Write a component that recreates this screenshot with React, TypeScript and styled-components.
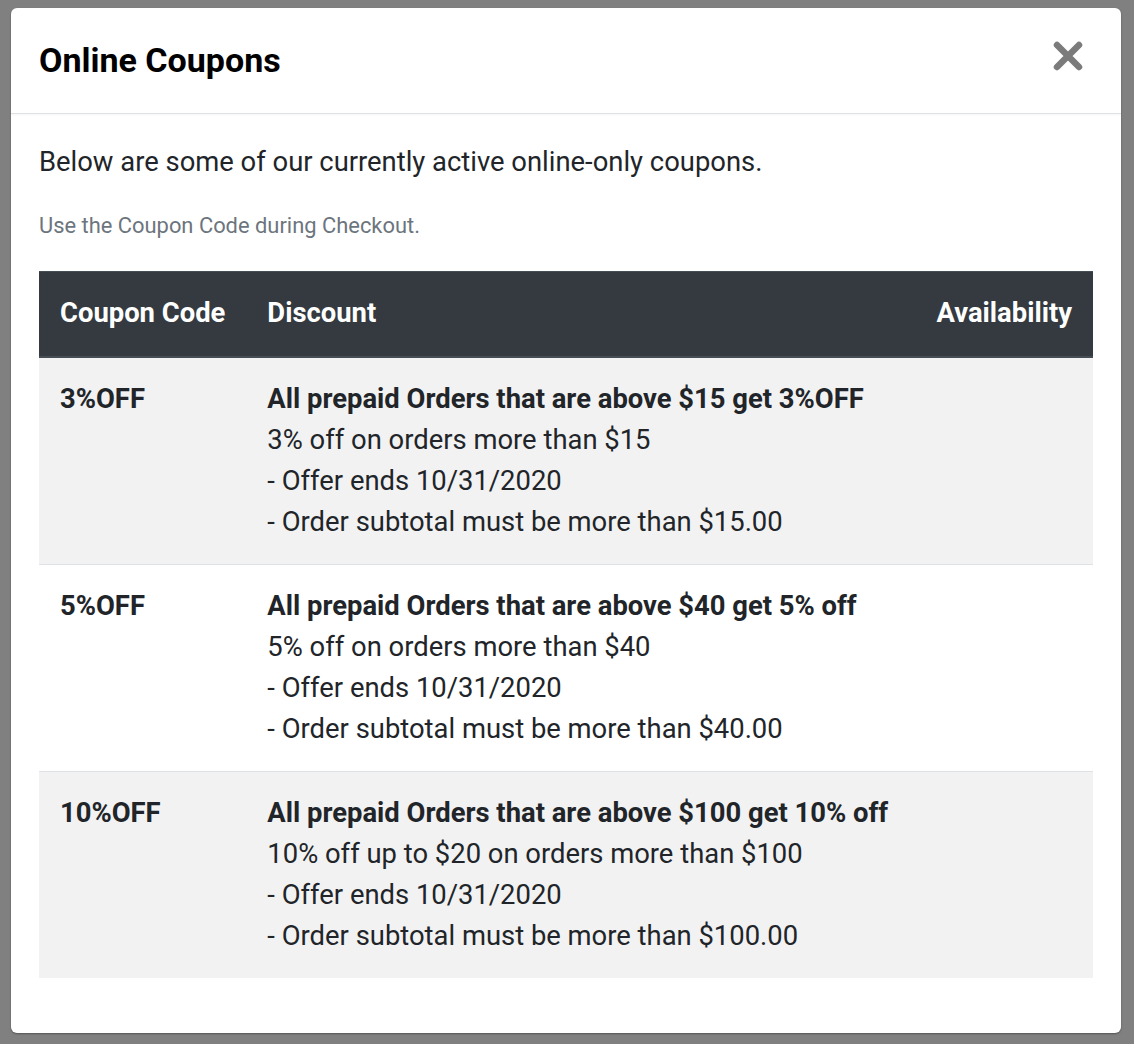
import { createGlobalStyle } from "styled-components";
import styled from "styled-components";

const GlobalStyle = createGlobalStyle`
	html, body {
		margin: 0;
		padding: 0;
		background: #808080;
	}
	body {
		font-family: Roboto, "Liberation Sans", Arial, sans-serif;
		color: #212529;
	}
`;

const Backdrop = styled.div`
	min-height: 1044px;
	padding: 8px 13px 0 11px;
	box-sizing: border-box;
`;

const Modal = styled.div`
	width: 1110px;
	background: #fff;
	border-radius: 6px;
	box-shadow: 0 1px 2px rgba(0, 0, 0, 0.35);
	overflow: hidden;
`;

const Header = styled.header`
	display: flex;
	align-items: center;
	justify-content: space-between;
	padding: 28px;
	border-bottom: 1px solid #dee2e6;
	box-shadow: 0 1px 2px rgba(0, 0, 0, 0.04);
`;

const Title = styled.h5`
	margin: 0;
	font-size: 34px;
	line-height: 49px;
	font-weight: 700;
	color: #000;
`;

const CloseButton = styled.button`
	display: flex;
	align-items: center;
	justify-content: center;
	width: 40px;
	height: 40px;
	margin: -9px 5px 0 0;
	padding: 0;
	border: 0;
	background: transparent;
	cursor: pointer;
`;

const Body = styled.div`
	padding: 28px 28px 27px;
`;

const Lead = styled.p`
	margin: 0 0 28px;
	font-size: 27.4px;
	line-height: 41px;
	color: #212529;
`;

const Hint = styled.p`
	margin: 0 0 31px;
	font-size: 21.9px;
	line-height: 29px;
	color: #6c757d;
`;

const Table = styled.table`
	width: 100%;
	margin-bottom: 28px;
	border-collapse: collapse;
	font-size: 27.4px;
	line-height: 41px;
`;

const HeadCell = styled.th<{ $align?: "left" | "right"; $width?: string }>`
	padding: 21px 21px 22px;
	text-align: ${({ $align }) => $align ?? "left"};
	width: ${({ $width }) => $width ?? "auto"};
	font-weight: 700;
	color: #fff;
	background: #343a40;
	border-top: 1px solid #454d55;
	border-bottom: 2px solid #454d55;
	white-space: nowrap;
`;

const Row = styled.tr<{ $striped: boolean }>`
	background: ${({ $striped }) => ($striped ? "#f2f2f2" : "#fff")};
`;

const Cell = styled.td<{ $bold?: boolean }>`
	padding: 21px;
	vertical-align: top;
	border-top: 1px solid #dee2e6;
	font-weight: ${({ $bold }) => ($bold ? 700 : 400)};
	color: #212529;
`;

const OfferTitle = styled.div`
	font-weight: 700;
	white-space: nowrap;
`;

const OfferLine = styled.div`
	font-weight: 400;
`;

interface Coupon {
	code: string;
	title: string;
	lines: string[];
}

const coupons: Coupon[] = [
	{
		code: "3%OFF",
		title: "All prepaid Orders that are above $15 get 3%OFF",
		lines: ["3% off on orders more than $15", "- Offer ends 10/31/2020", "- Order subtotal must be more than $15.00"],
	},
	{
		code: "5%OFF",
		title: "All prepaid Orders that are above $40 get 5% off",
		lines: ["5% off on orders more than $40", "- Offer ends 10/31/2020", "- Order subtotal must be more than $40.00"],
	},
	{
		code: "10%OFF",
		title: "All prepaid Orders that are above $100 get 10% off",
		lines: ["10% off up to $20 on orders more than $100", "- Offer ends 10/31/2020", "- Order subtotal must be more than $100.00"],
	},
];

function CloseIcon() {
	return (
		<svg width="30" height="30" viewBox="0 0 30 30" aria-hidden="true">
			<path d="M4 4 L26 26 M26 4 L4 26" stroke="#7b7b7b" strokeWidth="6.5" strokeLinecap="round" />
		</svg>
	);
}

export default function App() {
	return (
		<>
			<GlobalStyle />
			<Backdrop>
				<Modal role="dialog" aria-labelledby="coupons-title">
					<Header>
						<Title id="coupons-title">Online Coupons</Title>
						<CloseButton aria-label="Close">
							<CloseIcon />
						</CloseButton>
					</Header>
					<Body>
						<Lead>Below are some of our currently active online-only coupons.</Lead>
						<Hint>Use the Coupon Code during Checkout.</Hint>
						<Table>
							<thead>
								<tr>
									<HeadCell $width="165px">Coupon Code</HeadCell>
									<HeadCell>Discount</HeadCell>
									<HeadCell $align="right" $width="136px">Availability</HeadCell>
								</tr>
							</thead>
							<tbody>
								{coupons.map((c, i) => (
									<Row key={c.code} $striped={i % 2 === 0}>
										<Cell $bold>{c.code}</Cell>
										<Cell>
											<OfferTitle>{c.title}</OfferTitle>
											{c.lines.map((l) => (
												<OfferLine key={l}>{l}</OfferLine>
											))}
										</Cell>
										<Cell />
									</Row>
								))}
							</tbody>
						</Table>
					</Body>
				</Modal>
			</Backdrop>
		</>
	);
}
